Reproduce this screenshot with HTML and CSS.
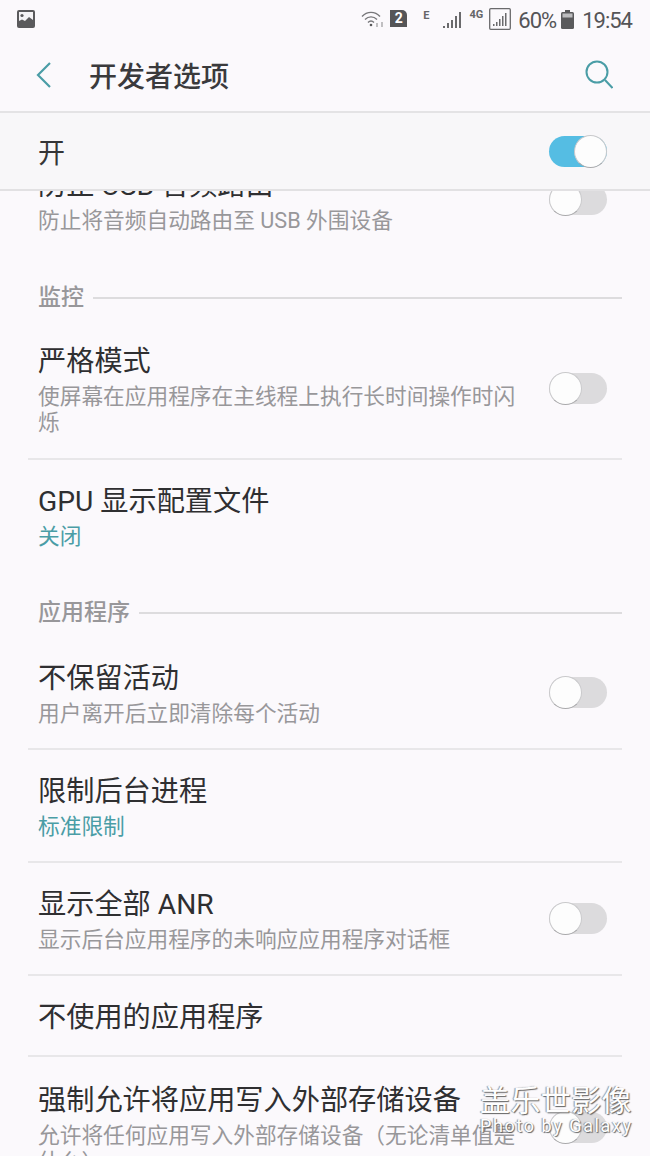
FILE: index.html
```html
<!DOCTYPE html>
<html lang="zh-CN">
<head>
  <meta charset="UTF-8">
  <meta name="viewport" content="width=device-width, initial-scale=1.0">
  <title>开发者选项</title>
  <link rel="stylesheet" href="styles.css">
</head>
<body>

  <!-- 状态栏 -->
  <div class="status-bar">
    <svg class="ico-photo" width="18" height="18" viewBox="0 0 18 18">
      <rect x="0" y="0" width="18" height="18" rx="2" fill="#5a5a5c"/>
      <rect x="2" y="2" width="14" height="13" fill="#f4f3f5"/>
      <circle cx="5" cy="5.5" r="1.6" fill="#5a5a5c"/>
      <path d="M2 15v-4l3-1.500 3 1.500 4-4 4 3v5z" fill="#5a5a5c"/>
    </svg>
    <div class="status-right">
      <svg class="ico-wifi" width="23" height="18" viewBox="0 0 23 18" fill="none" stroke="#77777a" stroke-width="1.400">
        <path d="M1 6.500c5-5.500 13-5.500 18 0"/>
        <path d="M4 9.500c3.500-3.500 8.500-3.500 12 0"/>
        <path d="M7 12.500c2-2 4-2 6 0"/>
        <circle cx="10" cy="15" r="1.300" fill="#5a5a5c" stroke="none"/>
        <path d="M16 13v4M21 12v5" stroke="#a8a8aa"/>
      </svg>
      <span class="sim-badge">2</span>
      <span class="net-tag net-e">E</span>
      <svg class="ico-signal" width="19" height="18" viewBox="0 0 19 18" fill="#6a6a6c">
        <rect x="0" y="15" width="2" height="2"/>
        <rect x="4" y="12" width="2" height="5"/>
        <rect x="8" y="9" width="2" height="8"/>
        <rect x="12" y="5" width="2" height="12"/>
        <rect x="16" y="1" width="2" height="16"/>
      </svg>
      <span class="net-tag net-4g">4G</span>
      <svg class="ico-signal-box" width="22" height="22" viewBox="0 0 22 22" fill="#6a6a6c">
        <rect x="0.700" y="0.700" width="20.600" height="20.600" rx="1" fill="none" stroke="#6a6a6c" stroke-width="1.300"/>
        <rect x="4" y="16" width="1.500" height="2"/>
        <rect x="7" y="14" width="1.500" height="4"/>
        <rect x="10" y="11" width="1.500" height="7"/>
        <rect x="13" y="8" width="1.500" height="10"/>
        <rect x="16" y="5" width="1.500" height="13"/>
      </svg>
      <span class="status-text pct">60%</span>
      <svg class="ico-battery" width="13" height="19" viewBox="0 0 13 19">
        <rect x="4" y="0" width="5" height="2" fill="#5a5a5c"/>
        <rect x="0" y="2" width="13" height="17" rx="1.500" fill="#5a5a5c"/>
        <rect x="1.500" y="3.500" width="10" height="4" fill="#bdbdbf"/>
      </svg>
      <span class="status-text clock">19:54</span>
    </div>
  </div>

  <!-- 标题栏 -->
  <div class="app-bar">
    <svg class="ico-back" width="18" height="28" viewBox="0 0 18 28" fill="none" stroke="#4a9da6" stroke-width="2.200">
      <path d="M15 2 3 14l12 12"/>
    </svg>
    <h1 class="app-title">开发者选项</h1>
    <svg class="ico-search" width="28" height="29" viewBox="0 0 28 29" fill="none" stroke="#4a9da6" stroke-width="2">
      <circle cx="12" cy="12" r="10.500"/>
      <path d="m20 20 7.500 8"/>
    </svg>
  </div>

  <!-- 总开关 -->
  <div class="master-row">
    <span class="master-label">开</span>
    <span class="switch on"><i></i></span>
  </div>

  <!-- 选项列表 -->
  <div class="list">
    <div class="list-inner">
      <div class="row row-first">
        <div class="row-text">
          <div class="row-title">防止 USB 音频路由</div>
          <div class="row-sub">防止将音频自动路由至 USB 外围设备</div>
        </div>
        <span class="switch"><i></i></span>
      </div>

      <div class="section section-first"><span>监控</span></div>

      <div class="row row-tall">
        <div class="row-text">
          <div class="row-title">严格模式</div>
          <div class="row-sub">使屏幕在应用程序在主线程上执行长时间操作时闪烁</div>
        </div>
        <span class="switch"><i></i></span>
      </div>
      <div class="row row-last">
        <div class="row-text">
          <div class="row-title">GPU 显示配置文件</div>
          <div class="row-sub accent">关闭</div>
        </div>
      </div>

      <div class="section"><span>应用程序</span></div>

      <div class="row">
        <div class="row-text">
          <div class="row-title">不保留活动</div>
          <div class="row-sub">用户离开后立即清除每个活动</div>
        </div>
        <span class="switch"><i></i></span>
      </div>
      <div class="row">
        <div class="row-text">
          <div class="row-title">限制后台进程</div>
          <div class="row-sub accent">标准限制</div>
        </div>
      </div>
      <div class="row">
        <div class="row-text">
          <div class="row-title">显示全部 ANR</div>
          <div class="row-sub">显示后台应用程序的未响应应用程序对话框</div>
        </div>
        <span class="switch"><i></i></span>
      </div>
      <div class="row row-single">
        <div class="row-text">
          <div class="row-title">不使用的应用程序</div>
        </div>
      </div>
      <div class="row row-last row-end">
        <div class="row-text">
          <div class="row-title">强制允许将应用写入外部存储设备</div>
          <div class="row-sub">允许将任何应用写入外部存储设备（无论清单值是什么）</div>
        </div>
        <span class="switch"><i></i></span>
      </div>
    </div>
  </div>

  <!-- 水印 -->
  <div class="watermark">
    <div class="wm-big">盖乐世影像</div>
    <div class="wm-small">Photo by Galaxy</div>
  </div>

</body>
</html>
```

FILE: styles.css
```css
* {
  box-sizing: border-box;
}

html, body {
  height: 100%;
}

body {
  font-family: Roboto, "Noto Sans CJK SC", sans-serif;
  margin: 0;
  padding: 0;
  background-color: #fbf9fc;
  color: #2f2f31;
  overflow: hidden;
  position: relative;
  display: flex;
  flex-direction: column;
}

/* 状态栏 */
.status-bar {
  height: 38px;
  display: flex;
  justify-content: space-between;
  align-items: flex-start;
  padding: 10px 18px 0 17px;
  flex: none;
}

.status-right {
  display: flex;
  align-items: flex-start;
}

.status-text {
  font-size: 22px;
  line-height: 22px;
  color: #555557;
  letter-spacing: -1px;
}

.pct {
  margin-left: 7px;
}

.clock {
  margin-left: 8px;
}

.ico-battery {
  margin-left: 5px;
}

.sim-badge {
  width: 17px;
  height: 17px;
  margin-left: 6px;
  background-color: #555557;
  color: #fff;
  font-size: 14px;
  font-weight: 700;
  line-height: 17px;
  text-align: center;
  border-top-right-radius: 5px;
}

.net-tag {
  font-size: 11px;
  font-weight: 700;
  line-height: 12px;
  color: #666668;
}

.net-e {
  margin-left: 16px;
  margin-top: 0;
}

.ico-signal {
  margin-left: 13px;
  margin-top: 1px;
}

.net-4g {
  margin-left: 8px;
  margin-top: -1px;
}

.ico-signal-box {
  margin-left: 6px;
  margin-top: -2px;
}

/* 标题栏 */
.app-bar {
  height: 75px;
  flex: none;
  display: flex;
  align-items: center;
  padding: 0 37px 0 35px;
  border-bottom: 2px solid #e4e3e5;
}

.ico-back {
  flex: none;
}

.app-title {
  flex: 1;
  margin: 0 0 0 36px;
  font-size: 28px;
  font-weight: 500;
  color: #3a3a3c;
}

/* 总开关 */
.master-row {
  height: 78px;
  flex: none;
  display: flex;
  justify-content: space-between;
  align-items: center;
  padding: 0 43px 0 38px;
  background-color: #f8f7f9;
  border-bottom: 2px solid #e2e1e3;
  position: relative;
  z-index: 1;
}

.master-label {
  font-size: 27px;
  color: #353537;
}

/* 开关 */
.switch {
  width: 58px;
  height: 31px;
  flex: none;
  border-radius: 16px;
  background-color: #dcdbdd;
  position: relative;
  display: block;
}

.row .switch {
  margin-top: -4px;
}

.switch i {
  position: absolute;
  top: -1px;
  left: 0;
  width: 33px;
  height: 33px;
  border-radius: 50%;
  background-color: #fdfdfd;
  border: 1px solid #c9c9cb;
  border-bottom-color: #a9a9ab;
}

.switch.on {
  background-color: #55bde3;
}

.switch.on i {
  left: 25px;
}

/* 列表 */
.list {
  flex: 1;
  overflow: hidden;
  min-height: 0;
}

.list-inner {
  margin: -47px 28px 0;
}

.row {
  display: flex;
  justify-content: space-between;
  align-items: center;
  padding: 24px 15px 21px 10px;
  border-bottom: 2px solid #e8e7e9;
}

.row-tall {
  padding-bottom: 22px;
}

.row-single {
  padding-bottom: 19px;
}

.row-first,
.row-last {
  padding-bottom: 24px;
  border-bottom: none;
}

.row-end {
  padding-top: 26px;
}

.row-text {
  flex: 1;
  min-width: 0;
  padding-right: 28px;
}

.row-title {
  font-size: 28.200px;
  line-height: 36px;
  color: #2f2f31;
}

.row-sub {
  margin-top: 4px;
  font-size: 21.700px;
  line-height: 26px;
  color: #98979a;
}

.row-sub.accent {
  color: #4a9da6;
}

/* 分组标题 */
.section {
  height: 63px;
  padding: 24px 0 9px 10px;
  display: flex;
  align-items: center;
  gap: 9px;
  font-size: 23px;
  font-weight: 500;
  line-height: 30px;
  color: #98979a;
}

.section-first {
  height: 62px;
  padding: 25px 0 7px 10px;
}

.section::after {
  content: "";
  flex: 1;
  height: 2px;
  background-color: #dddcde;
}

/* 水印 */
.watermark {
  position: absolute;
  right: 18px;
  bottom: 21px;
  width: 152px;
  color: #fff;
  text-shadow: 1px 1px 1px #555, -1px 0 1px #888;
  opacity: 0.9;
}

.wm-big {
  font-size: 30px;
  line-height: 32px;
  letter-spacing: 0.4px;
  white-space: nowrap;
}

.wm-small {
  font-size: 18px;
  line-height: 18px;
  letter-spacing: 1.600px;
  white-space: nowrap;
}
```
